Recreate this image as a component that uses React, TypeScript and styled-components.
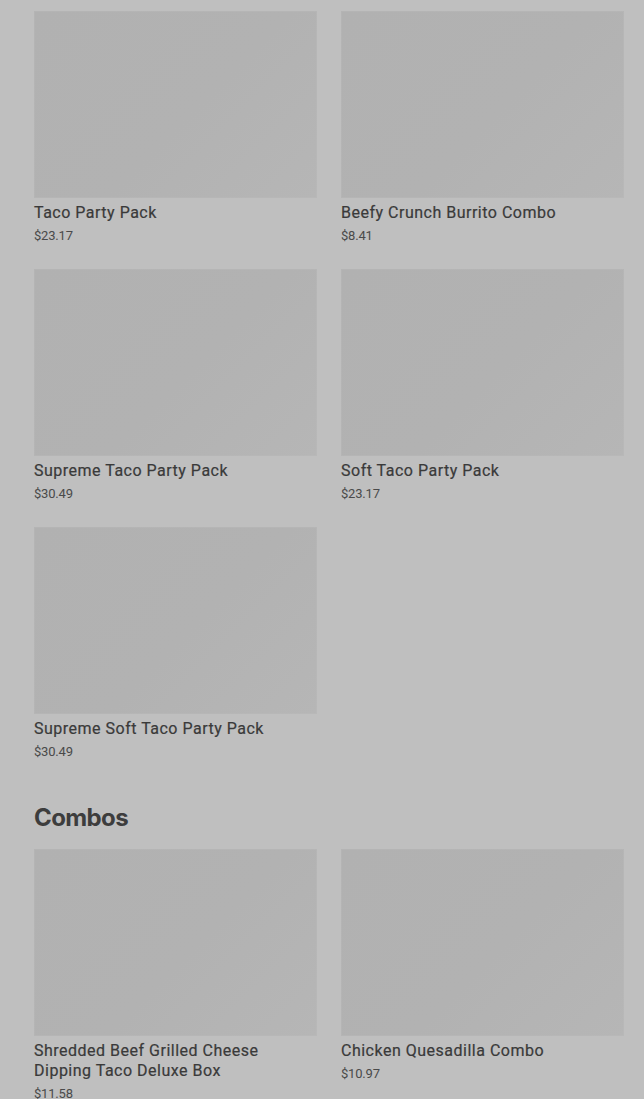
import React from "react";
import styled, { createGlobalStyle } from "styled-components";

const Global = createGlobalStyle`
  html, body { margin: 0; padding: 0; background: #bfbfbf; }
  body { font-family: Roboto, "Liberation Sans", sans-serif; }
`;

const Page = styled.main`
  padding: 11px 20px 40px 34px;
  background: #bfbfbf;
  min-height: 1099px;
  box-sizing: border-box;
`;

const Grid = styled.div`
  display: grid;
  grid-template-columns: 1fr 1fr;
  column-gap: 24px;
  row-gap: 24px;
`;

const Card = styled.article`
  display: flex;
  flex-direction: column;
`;

const Thumb = styled.div`
  height: 187px;
  background: linear-gradient(135deg, #b1b1b1 0%, #b2b2b2 55%, #b6b6b6 100%);
  box-shadow: inset 0 0 0 1px rgba(255, 255, 255, 0.04);
`;

const Title = styled.h3`
  margin: 5px 0 0;
  font-size: 16px;
  line-height: 20px;
  font-weight: 400;
  letter-spacing: 0.5px;
  color: #3a3a3a;
  -webkit-text-stroke: 0.2px #3a3a3a;
`;

const Price = styled.span`
  margin-top: 4px;
  font-size: 13px;
  line-height: 18px;
  color: #4a4a4a;
  letter-spacing: -0.2px;
`;

const SectionTitle = styled.h2`
  margin: 42px 0 16px;
  font-family: Inter, "Noto Sans", sans-serif;
  font-size: 24px;
  line-height: 30px;
  font-weight: 700;
  color: #3d3d3d;
  letter-spacing: -0.6px;
`;

const tacoItems = [
  { name: "Taco Party Pack", price: "$23.17" },
  { name: "Beefy Crunch Burrito Combo", price: "$8.41" },
  { name: "Supreme Taco Party Pack", price: "$30.49" },
  { name: "Soft Taco Party Pack", price: "$23.17" },
  { name: "Supreme Soft Taco Party Pack", price: "$30.49" },
];

const comboItems = [
  { name: "Shredded Beef Grilled Cheese Dipping Taco Deluxe Box", price: "$11.58" },
  { name: "Chicken Quesadilla Combo", price: "$10.97" },
];

function ItemCard({ name, price }: { name: string; price: string }) {
  return (
    <Card>
      <Thumb />
      <Title>{name}</Title>
      <Price>{price}</Price>
    </Card>
  );
}

export default function App() {
  return (
    <>
      <Global />
      <Page>
        <Grid>
          {tacoItems.map((i) => (
            <ItemCard key={i.name} {...i} />
          ))}
        </Grid>
        <SectionTitle>Combos</SectionTitle>
        <Grid>
          {comboItems.map((i) => (
            <ItemCard key={i.name} {...i} />
          ))}
        </Grid>
      </Page>
    </>
  );
}
